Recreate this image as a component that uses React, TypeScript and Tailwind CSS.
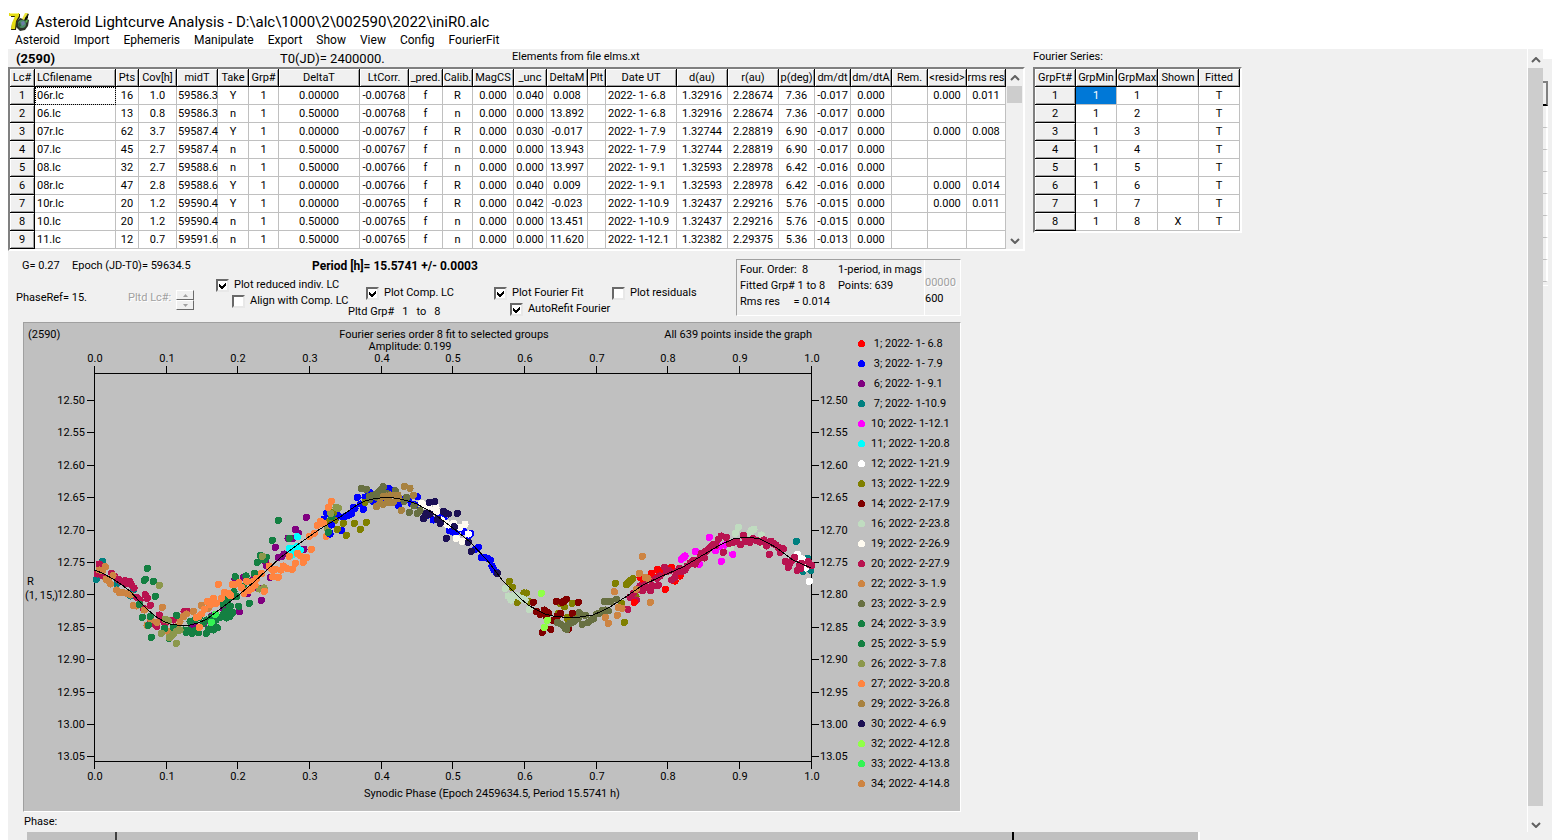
import type { ReactNode } from "react";

const menu = ["Asteroid", "Import", "Ephemeris", "Manipulate", "Export", "Show", "View", "Config", "FourierFit"];

type Column = { label: string; col: string; align?: string };

const columns: Column[] = [
  { label: "Lc#", col: "w-[25px]" },
  { label: "LCfilename", col: "w-[81px]", align: "pl-0.5" },
  { label: "Pts", col: "w-[23px]" },
  { label: "Cov[h]", col: "w-[38px]" },
  { label: "midT", col: "w-[41px]", align: "pl-px" },
  { label: "Take", col: "w-[31px]" },
  { label: "Grp#", col: "w-[30px]" },
  { label: "DeltaT", col: "w-[81px]" },
  { label: "LtCorr.", col: "w-[49px]" },
  { label: "_pred.", col: "w-[34px]" },
  { label: "Calib.", col: "w-[30px]" },
  { label: "MagCS", col: "w-[41px]" },
  { label: "_unc", col: "w-[33px]" },
  { label: "DeltaM", col: "w-[41px]" },
  { label: "Plt", col: "w-[18px]" },
  { label: "Date UT", col: "w-[71px]", align: "pl-0.5" },
  { label: "d(au)", col: "w-[51px]" },
  { label: "r(au)", col: "w-[51px]" },
  { label: "p(deg)", col: "w-[36px]" },
  { label: "dm/dt", col: "w-[36px]" },
  { label: "dm/dtA", col: "w-[41px]" },
  { label: "Rem.", col: "w-[36px]" },
  { label: "<resid>", col: "w-[39px]" },
  { label: "rms res", col: "w-[39px]" },
];

const rows = [
  "1|06r.lc|16|1.0|59586.3|Y|1|0.00000|-0.00768|f|R|0.000|0.040|0.008||2022- 1- 6.8|1.32916|2.28674|7.36|-0.017|0.000||0.000|0.011",
  "2|06.lc|13|0.8|59586.3|n|1|0.50000|-0.00768|f|n|0.000|0.000|13.892||2022- 1- 6.8|1.32916|2.28674|7.36|-0.017|0.000|||",
  "3|07r.lc|62|3.7|59587.4|Y|1|0.00000|-0.00767|f|R|0.000|0.030|-0.017||2022- 1- 7.9|1.32744|2.28819|6.90|-0.017|0.000||0.000|0.008",
  "4|07.lc|45|2.7|59587.4|n|1|0.50000|-0.00767|f|n|0.000|0.000|13.943||2022- 1- 7.9|1.32744|2.28819|6.90|-0.017|0.000|||",
  "5|08.lc|32|2.7|59588.6|n|1|0.50000|-0.00766|f|n|0.000|0.000|13.997||2022- 1- 9.1|1.32593|2.28978|6.42|-0.016|0.000|||",
  "6|08r.lc|47|2.8|59588.6|Y|1|0.00000|-0.00766|f|R|0.000|0.040|0.009||2022- 1- 9.1|1.32593|2.28978|6.42|-0.016|0.000||0.000|0.014",
  "7|10r.lc|20|1.2|59590.4|Y|1|0.00000|-0.00765|f|R|0.000|0.042|-0.023||2022- 1-10.9|1.32437|2.29216|5.76|-0.015|0.000||0.000|0.011",
  "8|10.lc|20|1.2|59590.4|n|1|0.50000|-0.00765|f|n|0.000|0.000|13.451||2022- 1-10.9|1.32437|2.29216|5.76|-0.015|0.000|||",
  "9|11.lc|12|0.7|59591.6|n|1|0.50000|-0.00765|f|n|0.000|0.000|11.620||2022- 1-12.1|1.32382|2.29375|5.36|-0.013|0.000|||",
].map((r) => r.split("|"));

const fourierHead = ["GrpFt#", "GrpMin", "GrpMax", "Shown", "Fitted"];

const palette = {
  red: "#ff0000",
  blue: "#0000ff",
  purple: "#800080",
  teal: "#008080",
  magenta: "#ff00ff",
  cyan: "#00ffff",
  white: "#ffffff",
  olive: "#808000",
  maroon: "#800000",
  pale: "#c0dcc0",
  ivory: "#fffbf0",
  crimson: "#b81350",
  peru: "#cd8442",
  moss: "#687042",
  green: "#148042",
  sage: "#8c984c",
  orange: "#ff8440",
  bronze: "#a88240",
  navy: "#1c1054",
  lime: "#90ff48",
  mint: "#34f454",
};
type Hue = keyof typeof palette;

const legend: [string, Hue][] = [
  ["\u00a01; 2022- 1- 6.8", "red"],
  ["\u00a03; 2022- 1- 7.9", "blue"],
  ["\u00a06; 2022- 1- 9.1", "purple"],
  ["\u00a07; 2022- 1-10.9", "teal"],
  ["10; 2022- 1-12.1", "magenta"],
  ["11; 2022- 1-20.8", "cyan"],
  ["12; 2022- 1-21.9", "white"],
  ["13; 2022- 1-22.9", "olive"],
  ["14; 2022- 2-17.9", "maroon"],
  ["16; 2022- 2-23.8", "pale"],
  ["19; 2022- 2-26.9", "ivory"],
  ["20; 2022- 2-27.9", "crimson"],
  ["22; 2022- 3- 1.9", "peru"],
  ["23; 2022- 3- 2.9", "moss"],
  ["24; 2022- 3- 3.9", "green"],
  ["25; 2022- 3- 5.9", "green"],
  ["26; 2022- 3- 7.8", "sage"],
  ["27; 2022- 3-20.8", "orange"],
  ["29; 2022- 3-26.8", "bronze"],
  ["30; 2022- 4- 6.9", "navy"],
  ["32; 2022- 4-12.8", "lime"],
  ["33; 2022- 4-13.8", "mint"],
  ["34; 2022- 4-14.8", "peru"],
];

// Observations per stretch of phase; each stretch has its own origin and three units per pixel.
const stretches: { x: number; y: number; runs: [Hue, string][] }[] = [
  {
    x: 80,
    y: 480,
    runs: [
      ["blue", "740,100 732,118 755,135 770,103 750,160 775,108"],
      ["purple", "334,439 343,440 372,430 395,408 430,385 439,394 478,395 503,340 520,298 490,292 465,297 544,361 535,324 571,292 560,258 556,245 586,202 595,232 605,230 613,222 624,175 640,175 646,148 655,160 672,208 679,112"],
      ["teal", "67,244 49,298 161,328 110,312 152,348"],
      ["cyan", "652,170 628,205 640,205 650,200 662,210 636,225 643,217"],
      ["olive", "752,120 765,122 772,148 745,128 760,98"],
      ["crimson", "58,252 52,282 68,288 95,280 105,290 115,298 125,305 136,302 142,310 150,305 155,315 162,324 170,352 180,360 196,344 202,355 211,376 190,385 210,428 230,439 238,405 280,420 290,412 312,395 322,394 255,432 220,432 240,418 300,415"],
      ["peru", "76,260 58,270 68,272 99,287 85,302 92,312 78,298 110,330 118,338 130,338 142,340 152,345 160,377 170,378 193,390 201,436 230,427 247,382 265,455 290,440 320,402 310,410 300,425 340,394 364,376 385,385 212,418 280,445"],
      ["green", "202,265 196,298 193,301 220,304 226,349 178,373 187,412 211,409 205,436 214,472 290,406 254,445 280,442 268,475 310,450 318,457 325,450 337,460 346,452 355,458 379,460 385,448 395,440 400,450 412,443 408,420 420,412 430,405 440,414 450,410 458,398 447,388 435,395 452,378 430,372 476,379 508,370 466,290 462,335 455,345 470,350 445,355 498,288 523,280 532,247 541,226 553,240 559,232 577,181 595,121 628,175 755,110 746,158 330,425 345,420 358,412 370,430 380,420 395,412 490,320 510,305 440,368"],
      ["sage", "238,316 547,229 538,327 552,324 244,460 268,473 280,462 289,490 290,453 300,450 255,418 265,422 275,468 752,100 768,82 775,85 742,145"],
      ["orange", "415,313 433,337 424,355 445,340 452,347 457,313 466,313 476,308 484,322 500,304 492,340 505,332 515,325 525,315 520,305 530,295 545,280 553,334 568,258 575,268 578,290 595,292 586,268 603,270 610,258 622,266 637,268 646,250 652,220 662,228 680,232 670,247 694,208 628,229 400,355 382,364 391,374 409,370 373,388 365,402 349,412 357,410 358,442 688,169 703,160 712,136 721,124 730,130 739,169 745,82 754,64"],
      ["mint", "406,403 394,427"],
    ],
  },
  {
    x: 320,
    y: 470,
    runs: [
      ["blue", "35,165 65,182 30,192 68,142 78,138 88,135 95,130 100,112 105,115 112,82 122,102 130,118 135,82 145,75 150,68 160,95 175,98 185,92 200,60 208,56 218,62 235,106 240,95 265,90 275,102 285,105 292,80 255,88 325,135 340,150 355,140 372,145 388,182 398,186 410,186 432,185 452,190 446,196 475,232 466,238 484,262 492,262 503,265 512,270 516,288 522,300 530,308 225,70 195,90"],
      ["white", "445,192"],
      ["olive", "52,178 70,160 103,160 121,178 139,157 79,196 568,334 577,352 612,369 619,369 592,397 628,395 733,410 757,400 715,430 742,445 720,400 135,97"],
      ["maroon", "640,397 650,425 660,433 673,420 685,428 722,430 709,394 727,397 739,388 775,397 757,430 692,478 667,487 680,442 700,452 745,478 712,438"],
      ["pale", "556,355 565,378 573,390 583,376 592,378 605,385 615,390 628,418"],
      ["ivory", "305,100 313,106 325,108 348,112 342,120 350,125 365,150 378,160 385,165 400,160 420,172 435,163 409,205 427,214"],
      ["moss", "124,55 139,58 148,80 157,76 167,72 178,65 184,58 190,50 226,62 172,82 150,88 200,70 178,75 268,127 260,82 252,95 282,108 292,130 300,122 712,457 722,462 735,475 745,465 755,458 765,450 775,445 778,428 736,470"],
      ["green", "25,187"],
      ["bronze", "253,49 270,55 280,76 244,121 169,110 190,80 200,78 212,75 225,76 234,76 180,98 190,103 202,98 215,98 220,97 205,88 235,85"],
      ["navy", "328,97 344,95 370,124 378,130 386,132 412,130 379,205 310,146 320,130 330,132 316,138 352,148 361,160 445,217 454,244 532,310 403,170"],
      ["lime", "664,370 682,451 673,472"],
    ],
  },
  {
    x: 560,
    y: 500,
    runs: [
      ["red", "274,220 292,208 298,215 250,250 255,240 240,232 310,215 334,202 345,243 316,268 360,228 320,210 285,232"],
      ["teal", "709,124 742,175 728,214 752,211"],
      ["magenta", "364,178 370,173 375,168 406,154 448,112 484,184 518,163 418,193 466,152 478,140 495,135"],
      ["white", "712,163 722,176 728,178 748,244 736,204"],
      ["olive", "37,310 22,352 46,350 166,250 199,254 205,248 211,242 218,236 193,367 228,290 185,310"],
      ["maroon", "10,305 55,307 37,340 25,388"],
      ["pale", "535,82 526,100 575,90 582,88 570,100 604,105 609,140 512,144"],
      ["crimson", "203,328 230,300 210,292 220,280 232,268 240,258 248,272 255,255 265,262 272,272 280,258 295,256 270,240 290,235 300,228 314,202 320,215 328,212 335,240 345,232 350,215 358,205 365,215 375,210 382,198 390,190 398,182 405,192 412,180 420,172 425,160 434,174 436,155 445,148 452,140 460,134 468,136 475,118 484,108 499,112 490,157 508,130 518,128 530,125 542,134 550,106 555,125 565,125 570,127 578,116 590,122 600,126 612,120 620,138 633,124 640,130 648,135 655,142 661,157 670,146 628,163 676,184 685,202 690,190 697,180 704,172 712,211 718,198 725,190 745,185 750,195 755,197 722,205"],
      ["red", "223,307"],
      ["peru", "247,169 238,220 256,232 264,236 229,268 271,307 163,275 175,322 186,325 172,346 136,352 145,370"],
      ["moss", "14,380 20,388 30,370 40,365 48,358 58,338 76,346 67,373 85,367 94,360 100,357 110,342 118,340 127,332 136,330 133,304 142,305 152,305 170,298 145,332"],
    ],
  },
];

const curve =
  "95,570 104,574 113,579 122,585 130,591 139,601 147,609 155,616 163,621 170,624 177,625 190,625 198,623 207,619 215,613 223,607 240,594 254,582 267,570 280,558 300,543 320,529 340,517 357,505 365,501 373,499 380,498 388,497 400,499 408,501 417,504 433,513 453,528 470,542 487,560 503,581 520,598 528,605 537,610 545,614 553,616 562,617 580,617 593,615 602,611 610,607 627,596 643,585 660,577 683,567 703,555 720,545 733,539 740,538 747,537 754,538 760,539 768,543 777,548 793,560 811,568";

const phases = [0, 1, 2, 3, 4, 5, 6, 7, 8, 9, 10];
const mags = ["12.50", "12.55", "12.60", "12.65", "12.70", "12.75", "12.80", "12.85", "12.90", "12.95", "13.00", "13.05"];

const head =
  "h-[18px] border-r border-b border-black bg-[#f0f0f0] p-0 text-center font-normal whitespace-nowrap shadow-[inset_1px_1px_0_#ffffff,inset_-1px_-1px_0_#a0a0a0]";
const cell = "h-[18px] border-r border-b border-[#c0c0c0] bg-white p-0 whitespace-nowrap";
const sunken = "border-2 border-t-[#808080] border-l-[#808080] border-r-white border-b-white";

function Chevron({ down }: { down?: boolean }) {
  return (
    <svg width="10" height="6" viewBox="0 0 10 6" fill="none" stroke="#606060" strokeWidth="2">
      <path d={down ? "M1 1l4 4 4-4" : "M1 5l4-4 4 4"} />
    </svg>
  );
}

function AppIcon() {
  return (
    <svg width="21" height="20" viewBox="0 0 21 20" aria-hidden="true">
      <path d="M2 2h9v3L8 10l-1 8H2l1-6 4-7H2z" fill="#2a2608" />
      <path d="M0 1h10v3L7 9l-1 8H2l1-6 3-7H0z" fill="#e4dc14" />
      <path d="M1 1h8v1H1z" fill="#f8f480" />
      <path d="M7 10l4-4 3 1 3-6 3 1-2 5 2 1-1 6-3 4-5 1-4-4z" fill="#2c3428" />
      <path d="M13 7l3-6h3l-4 7z" fill="#ece63c" />
      <path d="M16 6l3-3v3l-3 3z" fill="#121408" />
      <circle cx="13" cy="12" r="4" fill="#4c8c64" />
      <path d="M12 10l3-1 1 3-3 2z" fill="#6c7ca8" />
      <path d="M9 12l2-2 1 4-2 1z" fill="#2c5c3c" />
      <path d="M16 9l3-2-1 4z" fill="#58b048" />
    </svg>
  );
}

function Check({ label, checked }: { label: string; checked?: boolean }) {
  return (
    <label className="flex h-4 items-center gap-[5px] whitespace-nowrap">
      <span className="relative flex">
        <input
          type="checkbox"
          defaultChecked={checked}
          className="peer h-[13px] w-[13px] appearance-none border-2 border-t-[#696969] border-r-[#e8e8e8] border-b-[#e8e8e8] border-l-[#696969] bg-white"
        />
        <svg
          className="pointer-events-none absolute top-[3px] left-[3px] hidden peer-checked:block"
          width="7"
          height="7"
          viewBox="0 0 7 7"
          shapeRendering="crispEdges"
        >
          <path d="M0 2v3l2 2h1l4-4V0L2.5 4.500z" fill="#000" />
        </svg>
      </span>
      {label}
    </label>
  );
}

function LightcurveTable() {
  return (
    <div className={`flex w-[1017px] bg-white ${sunken}`}>
      <table className="w-[996px] table-fixed border-separate border-spacing-0 text-center leading-4">
        <thead>
          <tr>
            {columns.map((c) => (
              <th key={c.label} scope="col" className={`${head} ${c.col}`}>
                <div className={c.label === "LCfilename" ? "pl-0.5 text-left" : "-mx-1"}>{c.label}</div>
              </th>
            ))}
          </tr>
        </thead>
        <tbody>
          {rows.map((r, i) => (
            <tr key={r[0]}>
              {r.map((v, j) =>
                j === 0 ? (
                  <th key={j} scope="row" className={head}>
                    {v}
                  </th>
                ) : (
                  <td
                    key={j}
                    className={`${cell} ${
                      i === 0 && j === 1 ? "outline-1 -outline-offset-1 outline-dotted outline-black" : ""
                    }`}
                  >
                    <div className={columns[j].align ? `text-left whitespace-pre ${columns[j].align}` : "-mx-1"}>{v}</div>
                  </td>
                ),
              )}
            </tr>
          ))}
        </tbody>
      </table>
      <div className="flex flex-1 flex-col items-center justify-between bg-[#f0f0f0]">
        <button type="button" aria-label="Scroll up" className="flex h-[17px] items-center">
          <Chevron />
        </button>
        <div className="mx-px flex-1 self-stretch">
          <div className="h-[17px] bg-[#cdcdcd]" />
        </div>
        <button type="button" aria-label="Scroll down" className="flex h-[17px] items-center">
          <Chevron down />
        </button>
      </div>
    </div>
  );
}

function FourierTable() {
  return (
    <div className={`w-[209px] ${sunken}`}>
      <table className="w-full table-fixed border-separate border-spacing-0 text-center leading-4">
        <thead>
          <tr>
            {fourierHead.map((h) => (
              <th key={h} scope="col" className={head}>
                <div className="-mx-1">{h}</div>
              </th>
            ))}
          </tr>
        </thead>
        <tbody>
          {[1, 2, 3, 4, 5, 6, 7, 8].map((n) => (
            <tr key={n}>
              <th scope="row" className={head}>
                {n}
              </th>
              <td className={n === 1 ? "h-[18px] border-r border-b border-[#c0c0c0] bg-[#0078d7] p-0 text-white" : cell}>1</td>
              <td className={cell}>{n}</td>
              <td className={cell}>{n === 8 ? "X" : ""}</td>
              <td className={cell}>T</td>
            </tr>
          ))}
        </tbody>
      </table>
    </div>
  );
}

function Chart() {
  const px = (p: number) => 95 + Math.round(p * 71.65);
  const my = (i: number) => 400 + Math.round(i * 32.4);
  return (
    <figure className="w-[938px] border border-t-[#a0a0a0] border-r-white border-b-white border-l-[#a0a0a0] bg-[#c0c0c0]">
      <svg className="block" width="936" height="488" viewBox="24 323 936 488" fontSize="11">
        <g shapeRendering="crispEdges" stroke="#000" fill="none">
          <rect x="94.5" y="373.5" width="717" height="388" />
          {phases.map((p) => (
            <path key={p} d={`M${px(p) - 0.5} 366v8M${px(p) - 0.5} 761v8`} />
          ))}
          {mags.map((m, i) => (
            <path key={m} d={`M87 ${my(i) + 0.5}h8M811 ${my(i) + 0.5}h8`} />
          ))}
        </g>
        <g textAnchor="middle">
          {phases.map((p) => (
            <g key={p}>
              <text x={px(p)} y="362">{(p / 10).toFixed(1)}</text>
              <text x={px(p)} y="780">{(p / 10).toFixed(1)}</text>
            </g>
          ))}
        </g>
        {mags.map((m, i) => (
          <g key={m}>
            <text x="85" y={my(i) + 4} textAnchor="end">{m}</text>
            <text x="820" y={my(i) + 4}>{m}</text>
          </g>
        ))}
        <text x="28" y="338">(2590)</text>
        <text x="444" y="338" textAnchor="middle">Fourier series order 8 fit to selected groups</text>
        <text x="410" y="350" textAnchor="middle">Amplitude: 0.199</text>
        <text x="812" y="338" textAnchor="end">All 639 points inside the graph</text>
        <text x="492" y="797" textAnchor="middle">Synodic Phase (Epoch 2459634.5, Period 15.5741 h)</text>
        <text x="27" y="585">R</text>
        <text x="25" y="599">(1, 15,)</text>
        <g shapeRendering="crispEdges">
          {stretches.map((s) =>
            s.runs.map(([hue, pts], k) => (
              <g key={`${s.x}-${k}`} fill={palette[hue]}>
                {pts.split(" ").map((pt) => {
                  const [x, y] = pt.split(",").map(Number);
                  return <circle key={pt} cx={s.x + x / 3} cy={s.y + y / 3} r="3.6" />;
                })}
              </g>
            )),
          )}
          <polyline points={curve} fill="none" stroke="#000" />
          {legend.map(([label, hue], i) => (
            <circle key={label} cx="861.5" cy={343.5 + i * 20} r="3.5" fill={palette[hue]} />
          ))}
        </g>
        {legend.map(([label], i) => (
          <text key={label} x="871" y={347 + i * 20}>{label}</text>
        ))}
      </svg>
    </figure>
  );
}

function Stack({ className, children }: { className: string; children: ReactNode }) {
  return <div className={`flex flex-col ${className}`}>{children}</div>;
}

export default function App() {
  return (
    <div className="flex h-screen flex-col overflow-hidden bg-white font-['Roboto','Liberation_Sans',sans-serif] text-[11px] leading-4 text-black">
      <header className="h-[49px] shrink-0 pt-3">
        <div className="flex items-center gap-[5px] pl-[9px]">
          <AppIcon />
          <h1 className="text-[15px] leading-5 whitespace-nowrap">Asteroid Lightcurve Analysis - D:\alc\1000\2\002590\2022\iniR0.alc</h1>
        </div>
        <nav className="flex gap-3.5 pl-[15px] text-[12px] leading-[17px]">
          {menu.map((m) => (
            <button key={m} type="button">
              {m}
            </button>
          ))}
        </nav>
      </header>

      <div className="flex min-h-0 flex-1 pl-2">
        <main className="min-w-0 flex-1 overflow-hidden bg-[#f0f0f0]">
          <div className="flex gap-2">
            <div className="w-[1017px] shrink-0">
              <div className="grid h-[18px] grid-cols-[272px_232px_1fr] text-[13px]">
                <strong className="pt-0.5 pl-2">(2590)</strong>
                <span className="pt-0.5">T0(JD)= 2400000.</span>
                <span className="text-[11px]">Elements from file elms.xt</span>
              </div>
              <LightcurveTable />
            </div>
            <div>
              <div className="h-[18px]">Fourier Series:</div>
              <FourierTable />
            </div>
          </div>

          <div className="flex h-[71px]">
            <div className="w-[728px]">
              <div className="flex h-[26px] pt-[7px] pl-3.5">
                <span className="w-[50px]">G= 0.27</span>
                <span className="w-[240px]">Epoch (JD-T0)= 59634.5</span>
                <strong className="text-[12px]">Period [h]= 15.5741 +/- 0.0003</strong>
              </div>
              <div className="flex">
                <div className="flex w-[208px] items-start pt-[13px] pl-2">
                  <span className="w-28">PhaseRef= 15.</span>
                  <span className="w-12 text-[#a0a0a0] [text-shadow:1px_1px_0_#ffffff]">Pltd Lc#:</span>
                  <span className="flex flex-col">
                    <button type="button" aria-label="Next lightcurve" className="flex h-[10px] w-[18px] items-center justify-center border border-t-white border-r-[#696969] border-b-[#696969] border-l-white text-[#a0a0a0]">
                      <svg width="5" height="3" viewBox="0 0 5 3" fill="currentColor"><path d="M0 3l2.500-3L5 3z" /></svg>
                    </button>
                    <button type="button" aria-label="Previous lightcurve" className="flex h-[10px] w-[18px] items-center justify-center border border-t-white border-r-[#696969] border-b-[#696969] border-l-white text-[#a0a0a0]">
                      <svg width="5" height="3" viewBox="0 0 5 3" fill="currentColor"><path d="M0 0l2.500 3L5 0z" /></svg>
                    </button>
                  </span>
                </div>
                <Stack className="w-[132px]">
                  <Check label="Plot reduced indiv. LC" checked />
                  <div className="pl-4">
                    <Check label="Align with Comp. LC" />
                  </div>
                </Stack>
                <Stack className="w-[146px] pt-2">
                  <div className="pl-[18px]">
                    <Check label="Plot Comp. LC" checked />
                  </div>
                  <div className="flex gap-2 pt-[3px]">
                    <span>Pltd Grp#</span>
                    <span>1</span>
                    <span>to</span>
                    <span>8</span>
                  </div>
                </Stack>
                <Stack className="w-[118px] pt-2">
                  <Check label="Plot Fourier Fit" checked />
                  <div className="pl-4">
                    <Check label="AutoRefit Fourier" checked />
                  </div>
                </Stack>
                <div className="pt-2">
                  <Check label="Plot residuals" />
                </div>
              </div>
            </div>
            <div className="mt-2 flex h-[57px] w-[225px] border border-t-[#a0a0a0] border-r-white border-b-white border-l-[#a0a0a0]">
              <div className="grid w-[188px] grid-cols-[98px_1fr] content-start border-r border-white pt-0.5 pl-[3px] whitespace-pre">
                <span>Four. Order:  8</span>
                <span>1-period, in mags</span>
                <span>Fitted Grp# 1 to 8</span>
                <span>Points: 639</span>
                <span>Rms res     = 0.014</span>
              </div>
              <div className="flex-1 pt-[15px]">
                <div className="text-[#a0a0a0] [text-shadow:1px_1px_0_#ffffff]">00000</div>
                <div>600</div>
              </div>
            </div>
          </div>

          <div className="pl-[15px]">
            <Chart />
          </div>
          <div className="pt-0.5 pl-4">Phase:</div>
        </main>

        <div className="flex w-4 flex-col items-center border-l border-white bg-[#f0f0f0] pt-[3px]">
          <button type="button" aria-label="Scroll up" className="flex h-4 items-center">
            <Chevron />
          </button>
          <div className="flex-1 self-stretch bg-[#cdcdcd]" />
          <button type="button" aria-label="Scroll down" className="flex h-[26px] items-center pt-3">
            <Chevron down />
          </button>
        </div>

        <div className="flex w-[9px] flex-col bg-[#f0f0f0]">
          <div className="h-[10px] bg-white" />
          <div className="mt-[22px] h-[25px] w-[5px] border-t-2 border-r-2 border-b-2 border-t-[#808080] border-r-[#808080] border-b-black" />
          {[0, 1, 2, 3, 4, 5, 6, 7].map((n) => (
            <div key={n} className="h-[22px] w-[5px] border-r-2 border-b border-r-white border-b-[#c0c0c0]" />
          ))}
          <div className="h-1 w-[5px] border-b border-white" />
        </div>
      </div>

      <footer className="flex h-2 shrink-0 pl-2">
        <div className="flex w-[1192px] border-r-2 border-l-[19px] border-r-white border-l-[#f0f0f0] bg-[#c0c0c0]">
          <div className="w-[90px] border-r-2 border-[#404040]" />
          <div className="w-[897px] border-r-2 border-black" />
        </div>
        <div className="flex-1 bg-[#f0f0f0]" />
      </footer>
    </div>
  );
}
